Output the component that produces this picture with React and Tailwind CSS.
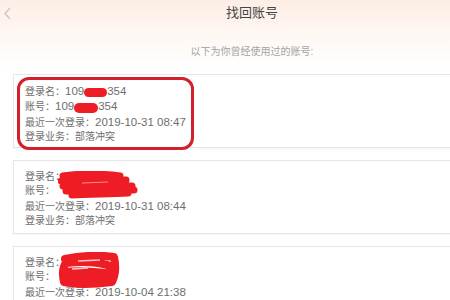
const accounts = [
  { time: '2019-10-31 08:47', circled: true },
  { time: '2019-10-31 08:44', scribble: 'a' },
  { time: '2019-10-04 21:38', scribble: 'b' },
];

function Num({ children }) {
  return <span className="text-[11.5px]">{children}</span>;
}

function Blob({ className }) {
  return <span className={`inline-block bg-[#ee1c25] rounded-full align-middle ${className}`} />;
}

function Scribble({ variant }) {
  if (variant === 'a') {
    return (
      <svg className="absolute left-[44px] top-[10px]" width="80" height="28" viewBox="0 0 80 28">
        <path d="M5 5 C22 2 48 3 62 5 M3 10 C24 8 52 8 68 9 M5 15 C28 13 56 14 74 15 M8 20 C30 18 56 19 76 19 M14 24 C32 23 52 23 70 22" stroke="#ee1c25" strokeWidth="7" strokeLinecap="round" fill="none" />
        <path d="M24 12 L50 11" stroke="#ff8a8a" strokeWidth="1.2" fill="none" />
      </svg>
    );
  }
  return (
    <svg className="absolute left-[44px] top-[5px]" width="62" height="36" viewBox="0 0 62 36">
      <path d="M7 7 C22 4 42 3 56 5 C58 14 57 24 54 30 C38 32 20 33 6 30 C4 22 5 14 8 11 C24 9 42 10 52 14 M7 20 C24 18 40 20 54 22 M10 26 L50 26" stroke="#ee1c25" strokeWidth="8" strokeLinecap="round" strokeLinejoin="round" fill="none" />
      <path d="M20 9 L42 8 M14 17 L30 16" stroke="#ffc6c6" strokeWidth="1.5" fill="none" />
    </svg>
  );
}

export default function App() {
  return (
    <div className="w-[450px] h-[300px] overflow-hidden bg-white" style={{ fontFamily: '"Liberation Sans", "Noto Sans CJK SC", sans-serif' }}>
      <div className="w-[504px]">
        {/* header */}
        <div className="relative h-[68px] bg-gradient-to-b from-[#fdeee5] via-[#fef7f2] to-white">
          <svg className="absolute left-[3px] top-[7px]" width="9" height="13" viewBox="0 0 9 13">
            <path d="M7 1 L2 6.5 L7 12" stroke="#c9c2be" strokeWidth="1.2" fill="none" />
          </svg>
          <div className="pt-[4px] text-center text-[13px] leading-[18px] text-[#444]">找回账号</div>
          <div className="pt-[23px] text-center text-[10px] leading-[14px] text-[#a3a3a3]">以下为你曾经使用过的账号:</div>
        </div>

        {/* list */}
        <div className="flex flex-col gap-[12px] px-[13px] pt-[6px]">
          {accounts.map((a, i) => (
            <div key={i} className="relative h-[74px] border border-[#e6e6e6] bg-white shadow-[0_1px_2px_rgba(0,0,0,0.04)] px-[11px] pt-[9px] text-[10px] leading-[14.3px] text-[#6e6e6e]">
              <div>
                登录名：{a.circled ? <><Num>109</Num><Blob className="w-[23px] h-[9px]" /><Num>354</Num></> : null}
              </div>
              <div>
                账号：{a.circled ? <><Num>109</Num><Blob className="w-[24px] h-[10px]" /><Num>354</Num></> : null}
              </div>
              <div>最近一次登录：<Num>{a.time}</Num></div>
              <div>登录业务：部落冲突</div>
              {a.scribble && <Scribble variant={a.scribble} />}
              {a.circled && (
                <div className="absolute left-[3px] top-[2px] w-[177px] h-[73px] border-[3px] border-[#d3212c] rounded-[12px]" />
              )}
            </div>
          ))}
        </div>
      </div>
    </div>
  );
}
